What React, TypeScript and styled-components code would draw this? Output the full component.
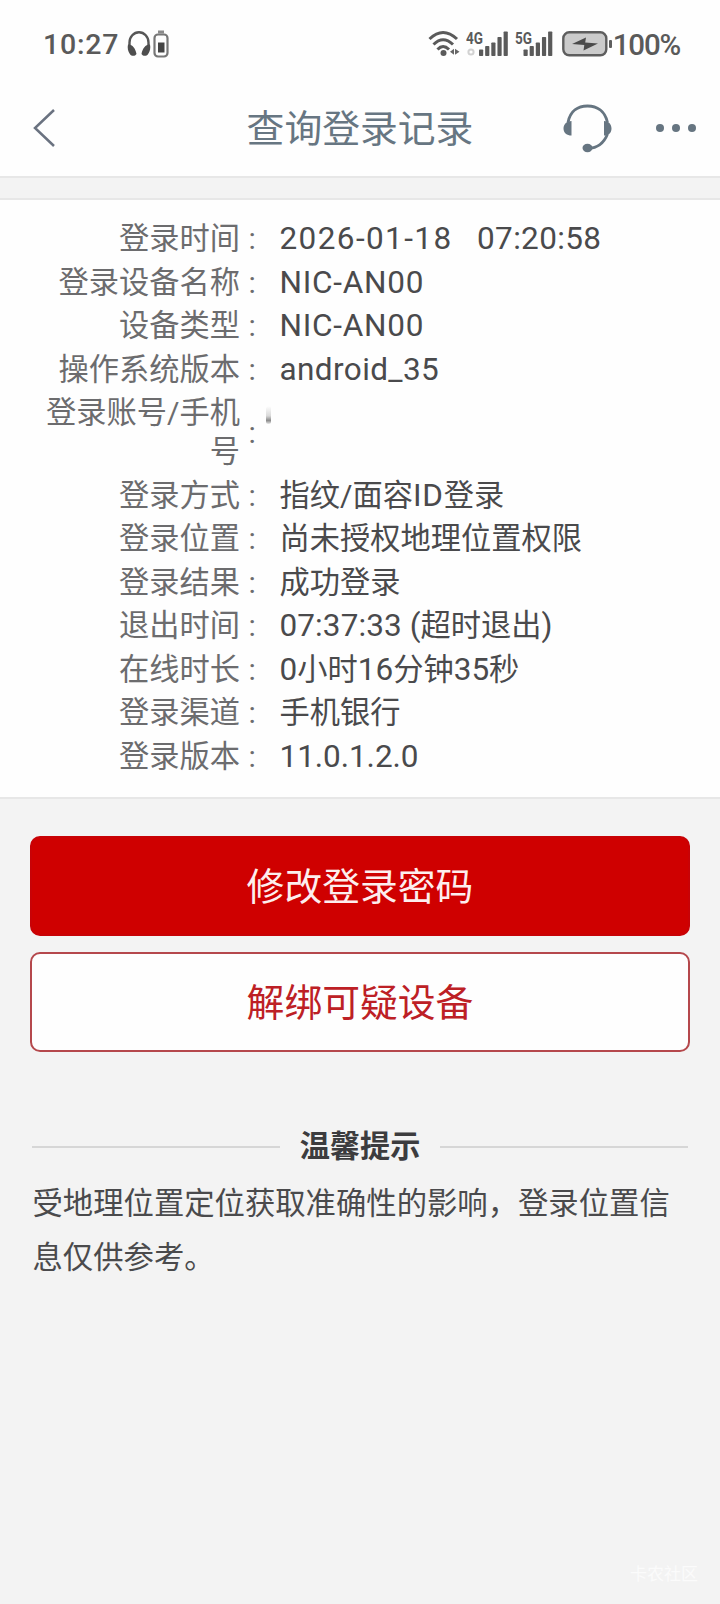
import React from "react";
import styled, { createGlobalStyle } from "styled-components";

const Global = createGlobalStyle`
  * { box-sizing: border-box; }
  body { margin: 0; background: #f3f3f3; }
`;

const Page = styled.div`
  display: flex;
  flex-direction: column;
  width: 720px;
  min-height: 1604px;
  background: #f3f3f3;
  color: #4a4a4c;
  font-family: Roboto, "Noto Sans CJK SC", sans-serif;
`;

const StatusBar = styled.header`
  display: flex;
  align-items: center;
  height: 88px;
  padding: 0 40px 0 43px;
  background: #fefefe;
`;

const StatusText = styled.span<{ $size: number; $spacing: number }>`
  padding-top: 2px;
  font-size: ${(p) => p.$size}px;
  letter-spacing: ${(p) => p.$spacing}px;
  font-weight: 500;
  line-height: 40px;
  color: #5a5a5a;
  white-space: nowrap;
`;

const StatusIcons = styled.div`
  display: flex;
  align-items: center;
  margin-left: auto;
`;

const Icon = styled.svg<{ $left?: number }>`
  display: block;
  flex: none;
  margin-left: ${(p) => p.$left ?? 0}px;
`;

const NavBar = styled.nav`
  display: grid;
  grid-template-columns: 1fr auto 1fr;
  align-items: center;
  height: 90px;
  padding: 0 23px 8px 32px;
  background: #fefefe;
  border-bottom: 2px solid #e7e7e7;
`;

const Title = styled.h1`
  margin: 0 0 0 -9px;
  padding-top: 2px;
  color: #677682;
  font-size: 37.8px;
  font-weight: 400;
  line-height: 56px;
`;

const NavActions = styled.div`
  display: flex;
  align-items: center;
  justify-content: flex-end;
  gap: 42px;
`;

const Details = styled.dl`
  display: flex;
  flex-direction: column;
  gap: 4.1px;
  height: 601px;
  margin: 20px 0 0;
  padding: 19px 0 0 31px;
  background: #fefefe;
  border-top: 2px solid #e7e7e7;
  border-bottom: 2px solid #e7e7e7;
`;

const Row = styled.div`
  display: grid;
  grid-template-columns: 209px 39.5px 1fr;
  align-items: center;
  font-size: 30.25px;
  line-height: 39.4px;
`;

const Label = styled.dt`
  color: #6c6c6e;
  text-align: right;
`;

const Colon = styled.span`
  padding-left: 8.5px;
  color: #6c6c6e;
`;

const Value = styled.dd`
  margin: 0;
  color: #4a4a4c;
  white-space: pre;
`;

const Latin = styled.span<{ $spacing: number }>`
  font-size: 31.5px;
  line-height: 1;
  letter-spacing: ${(p) => p.$spacing}px;
`;

const Masked = styled.span`
  display: block;
  width: 5px;
  height: 18px;
  margin: -26px 0 0 -14px;
  border-radius: 4px 2px 3px 3px;
  background: linear-gradient(#fefefe, #d9d9d9 55%, #8c8c8c 80%, #e6e6e6);
`;

const Actions = styled.div`
  display: flex;
  flex-direction: column;
  gap: 16px;
  padding: 37px 30px 0;
`;

const Button = styled.button<{ $primary?: boolean }>`
  height: 100px;
  padding: 1px 0 0;
  border: 2px solid ${(p) => (p.$primary ? "#c80206" : "#b5484c")};
  border-radius: 10px;
  background: ${(p) => (p.$primary ? "#cf0000" : "#fefefe")};
  color: ${(p) => (p.$primary ? "#fdeeee" : "#bd2025")};
  font-family: inherit;
  font-size: 37.8px;
  line-height: 56px;
`;

const Tips = styled.section`
  padding: 73px 32px 0;
`;

const TipsHeading = styled.h2`
  display: flex;
  align-items: center;
  gap: 20px;
  margin: 0;
  color: #3c3c3e;
  font-size: 30.2px;
  font-weight: 700;
  line-height: 44px;

  &::before,
  &::after {
    content: "";
    flex: 1;
    height: 2px;
    background: #d6d6d6;
  }
`;

const TipsText = styled.p`
  margin: 8px -6px 0 0.5px;
  color: #4a4a4c;
  font-size: 30.35px;
  line-height: 53.6px;
`;

const Watermark = styled.footer`
  margin: auto 22px 17px auto;
  color: #fbfbfb;
  font-size: 17px;
  line-height: 26px;
`;

const barHeights = [6.5, 10, 13.5, 19, 24.5];

type Signal = { label: string; left: number; offset: number; faintDot?: boolean };

const SignalIcon = ({ label, left, offset, faintDot }: Signal) => (
  <Icon $left={left} width={offset + 29} height="28" viewBox={`0 0 ${offset + 29} 28`}>
    <text x="0" y="13.5" fontSize="16" fontWeight="700" fill="#5a5a5a" textLength="17" lengthAdjust="spacingAndGlyphs">
      {label}
    </text>
    {barHeights.map((h, i) => (
      <rect key={h} x={offset + i * 6.15} y={26 - h} width="4.2" height={h} rx="0.8" fill="#5a5a5a" />
    ))}
    {faintDot && <circle cx="5" cy="22" r="2.6" fill="none" stroke="#d2d2d2" strokeWidth="2" />}
  </Icon>
);

type Entry = { label: string; value: React.ReactNode };

const entries: Entry[] = [
  {
    label: "登录时间",
    value: (
      <>
        <Latin $spacing={1.4}>2026-01-18</Latin>
        <Latin $spacing={0.35}>{"   07:20:58"}</Latin>
      </>
    ),
  },
  { label: "登录设备名称", value: <Latin $spacing={0.75}>NIC-AN00</Latin> },
  { label: "设备类型", value: <Latin $spacing={0.75}>NIC-AN00</Latin> },
  { label: "操作系统版本", value: <Latin $spacing={0.4}>android_35</Latin> },
  { label: "登录账号/手机号", value: <Masked /> },
  { label: "登录方式", value: <>指纹/面容<Latin $spacing={0.8}>ID</Latin>登录</> },
  { label: "登录位置", value: "尚未授权地理位置权限" },
  { label: "登录结果", value: "成功登录" },
  {
    label: "退出时间",
    value: (
      <>
        <Latin $spacing={0.1}>07:37:33 (</Latin>超时退出<Latin $spacing={0}>)</Latin>
      </>
    ),
  },
  {
    label: "在线时长",
    value: (
      <>
        <Latin $spacing={0}>0</Latin>小时<Latin $spacing={0}>16</Latin>分钟<Latin $spacing={0}>35</Latin>秒
      </>
    ),
  },
  { label: "登录渠道", value: "手机银行" },
  { label: "登录版本", value: <Latin $spacing={-0.05}>11.0.1.2.0</Latin> },
];

export default function App() {
  return (
    <Page>
      <Global />
      <StatusBar>
        <StatusText $size={28.5} $spacing={0.8}>10:27</StatusText>
        <Icon $left={8} width="24" height="28" viewBox="0 0 24 28" fill="none">
          <path d="M2.5 17V12.500a9.500 10.200 0 0 1 19 0V17" stroke="#565656" strokeWidth="2.400" />
          <path d="M1 14.500c4-.5 7.500 3.500 8.500 9.500-1.500 2.500-5 2.300-6.500.3C1 21.500.2 18 1 14.500zM23 14.500c-4-.5-7.500 3.500-8.500 9.500 1.500 2.500 5 2.300 6.500.3 2-2.800 2.800-6.300 2-9.800z" fill="#4e4e4e" />
        </Icon>
        <Icon $left={2} width="16" height="30" viewBox="0 0 16 30" fill="none">
          <path d="M5 3h6" stroke="#8a8a8a" strokeWidth="3" />
          <rect x="1.500" y="5.500" width="13" height="22" rx="3.500" stroke="#777" strokeWidth="2.200" />
          <rect x="5" y="13.500" width="6.500" height="10" fill="#444" />
        </Icon>
        <StatusIcons>
          <Icon width="32" height="28" viewBox="0 0 32 28" fill="none" stroke="#5a5a5a" strokeWidth="3">
            <path d="M1.500 9Q15 -4 29 9" />
            <path d="M5.500 14.500Q15 5 25 14.500" />
            <path d="M9.500 19.500Q15 13.500 21 19.500" />
            <circle cx="15.500" cy="23" r="3" fill="#5a5a5a" stroke="none" />
            <path d="M22 21.700l4-3v6zM31.500 21.700l-4.500-3v6z" fill="#666" stroke="none" />
          </Icon>
          <SignalIcon left={6} label="4G" offset={13} faintDot />
          <SignalIcon left={7} label="5G" offset={8.5} />
          <Icon $left={9} width="51" height="28" viewBox="0 0 51 28">
            <rect x="1.300" y="2.300" width="43" height="23" rx="6" fill="#cbcbcb" stroke="#5e5e5e" strokeWidth="2.400" />
            <rect x="47" y="10" width="3" height="8" rx="1" fill="#5e5e5e" />
            <path d="M10 14l14-6.500-.8 5 12.800 1-14.500 7 .8-5.500z" fill="#4a4a4a" />
          </Icon>
          <StatusText $size={29.5} $spacing={-1.2}>100%</StatusText>
        </StatusIcons>
      </StatusBar>

      <NavBar>
        <Icon width="24" height="40" viewBox="0 0 24 40" fill="none">
          <path d="M22 2L3 20l19 18" stroke="#6a7280" strokeWidth="2.500" />
        </Icon>
        <Title>查询登录记录</Title>
        <NavActions>
          <Icon width="50" height="50" viewBox="0 0 50 50" fill="none">
            <path d="M5 19.500C7 8 15 3 24.500 3S42 8 44.500 19.500M44.500 31C41 40 35 45 25 45.500" stroke="#667581" strokeWidth="2.800" />
            <path d="M8.500 18v14.500C4 32.500 0.500 30 0.500 25.500S4 18 8.500 18zM41 18v14.500c4.500 0 7.500-2.500 7.500-7S45.500 18 41 18z" fill="#667581" />
            <ellipse cx="24.500" cy="45" rx="5" ry="4.200" fill="#667581" />
          </Icon>
          <Icon width="42" height="10" viewBox="0 0 42 10" fill="#667581">
            <circle cx="5" cy="5" r="4" />
            <circle cx="21" cy="5" r="4" />
            <circle cx="37" cy="5" r="4" />
          </Icon>
        </NavActions>
      </NavBar>

      <Details>
        {entries.map((entry) => (
          <Row key={entry.label}>
            <Label>{entry.label}</Label>
            <Colon>:</Colon>
            <Value>{entry.value}</Value>
          </Row>
        ))}
      </Details>

      <Actions>
        <Button $primary>修改登录密码</Button>
        <Button>解绑可疑设备</Button>
      </Actions>

      <Tips>
        <TipsHeading>温馨提示</TipsHeading>
        <TipsText>受地理位置定位获取准确性的影响，登录位置信息仅供参考。</TipsText>
      </Tips>

      <Watermark>卡农社区</Watermark>
    </Page>
  );
}
